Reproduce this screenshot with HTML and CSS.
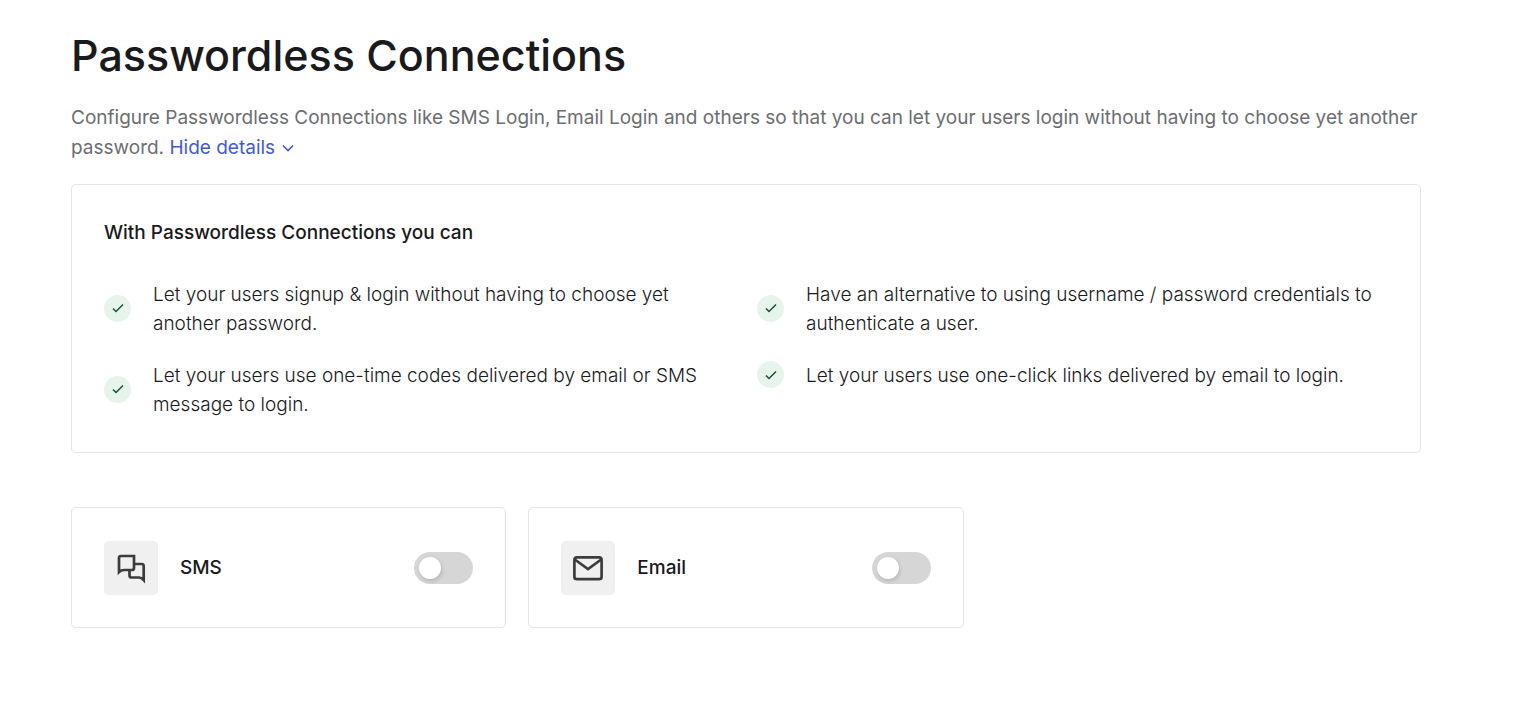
FILE: index.html
```html
<!DOCTYPE html>
<html lang="en">
<head>
<meta charset="utf-8">
<meta name="viewport" content="width=device-width, initial-scale=1">
<title>Passwordless Connections</title>
<link rel="stylesheet" href="styles.css">
</head>
<body>
<main class="page">
  <h1 class="title">Passwordless Connections</h1>
  <p class="intro">Configure Passwordless Connections like SMS Login, Email Login and others so that you can let your users login without having to choose yet another password. <button class="details-toggle" type="button" aria-expanded="true">Hide details <svg class="chevron" viewBox="0 0 12 8" aria-hidden="true"><path d="M1 1.500l5 5 5-5"/></svg></button></p>

  <section class="details">
    <h2 class="details-title">With Passwordless Connections you can</h2>
    <ul class="benefits">
      <li class="benefit"><span class="check"><svg viewBox="0 0 12 10" aria-hidden="true"><path d="M1 5.500l3 3L11 1.500"/></svg></span><span>Let your users signup &amp; login without having to choose yet another password.</span></li>
      <li class="benefit"><span class="check"><svg viewBox="0 0 12 10" aria-hidden="true"><path d="M1 5.500l3 3L11 1.500"/></svg></span><span>Have an alternative to using username / password credentials to authenticate a user.</span></li>
      <li class="benefit"><span class="check"><svg viewBox="0 0 12 10" aria-hidden="true"><path d="M1 5.500l3 3L11 1.500"/></svg></span><span>Let your users use one-time codes delivered by email or SMS message to login.</span></li>
      <li class="benefit"><span class="check"><svg viewBox="0 0 12 10" aria-hidden="true"><path d="M1 5.500l3 3L11 1.500"/></svg></span><span>Let your users use one-click links delivered by email to login.</span></li>
    </ul>
  </section>

  <section class="connections">
    <div class="card">
      <span class="card-icon"><svg viewBox="0 0 32 32" aria-hidden="true"><path d="M19 4H6Q4 4 4 6V20Q6 18 9 18H17Q19 18 19 16Z"/><path d="M19 12H26.700Q28.700 12 28.700 14V28Q26.500 25.500 24 25.500H16.500Q14.500 25.500 14.500 23.500V18"/></svg></span>
      <label class="card-name" for="sms">SMS</label>
      <input class="switch" id="sms" type="checkbox" role="switch">
    </div>
    <div class="card">
      <span class="card-icon"><svg viewBox="0 0 32 32" aria-hidden="true"><rect x="2.400" y="5.400" width="27.200" height="21.800" rx="2.500"/><path d="M2.800 7.500L16 17 29.200 7.500"/></svg></span>
      <label class="card-name" for="email">Email</label>
      <input class="switch" id="email" type="checkbox" role="switch">
    </div>
  </section>
</main>
</body>
</html>
```
FILE: styles.css
```css
* {
  box-sizing: border-box;
}

body {
  margin: 0;
  background: #fff;
  color: #1a1a1c;
  font: 400 19px/30px Inter, "Liberation Sans", sans-serif;
}

.page {
  padding: 28px 93px 40px 71px;
}

.title {
  margin: 0 0 21px;
  font-size: 43px;
  font-weight: 500;
  line-height: 54px;
}

.intro {
  margin: 0 0 21px;
  color: #6c6e72;
}

.details-toggle {
  padding: 0;
  border: 0;
  background: none;
  color: #3f59e4;
  font: inherit;
  cursor: pointer;
}

.chevron {
  width: 12px;
  height: 8px;
  margin-left: 2px;
  vertical-align: 2px;
  fill: none;
  stroke: currentColor;
  stroke-width: 1.6;
}

.details {
  padding: 33px 32px;
  border: 1px solid #e5e5e5;
  border-radius: 5px;
}

.details-title {
  margin: 0 0 32px;
  font-size: 19px;
  font-weight: 500;
  line-height: 30px;
}

.benefits {
  display: grid;
  grid-template-columns: 1fr 1fr;
  gap: 23px 22px;
  margin: 0;
  padding: 0;
  list-style: none;
  font-weight: 300;
  line-height: 29px;
}

.benefit {
  display: flex;
  align-items: center;
  align-self: start;
  gap: 22px;
}

.check {
  display: grid;
  flex: none;
  place-items: center;
  width: 27px;
  height: 27px;
  margin-bottom: 2px;
  border-radius: 50%;
  background: #e6f4ec;
}

.check svg {
  width: 12px;
  height: 10px;
  fill: none;
  stroke: #13522f;
  stroke-width: 1.5;
}

.connections {
  display: grid;
  grid-template-columns: repeat(auto-fill, minmax(400px, 1fr));
  gap: 22px;
  margin-top: 54px;
}

.card {
  display: flex;
  align-items: center;
  gap: 22px;
  padding: 33px 32px 32px;
  border: 1px solid #e5e5e5;
  border-radius: 5px;
}

.card-icon {
  display: grid;
  place-items: center;
  width: 54px;
  height: 54px;
  border-radius: 5px;
  background: #f0f0f0;
}

.card-icon svg {
  width: 32px;
  height: 32px;
  fill: none;
  stroke: #3c3c3e;
  stroke-width: 2.7;
}

.card-name {
  flex: 1;
  font-weight: 500;
}

.switch {
  width: 59px;
  height: 32px;
  margin: 0;
  padding: 5px;
  border-radius: 16px;
  background: #d6d6d6;
  appearance: none;
  cursor: pointer;
}

.switch::before {
  display: block;
  width: 22px;
  height: 22px;
  border-radius: 50%;
  background: #fff;
  box-shadow: 1px 2px 4px rgb(0 0 0 / 16%);
  content: "";
}

.switch:checked {
  background: #3f59e4;
}

.switch:checked::before {
  margin-left: auto;
}
```
